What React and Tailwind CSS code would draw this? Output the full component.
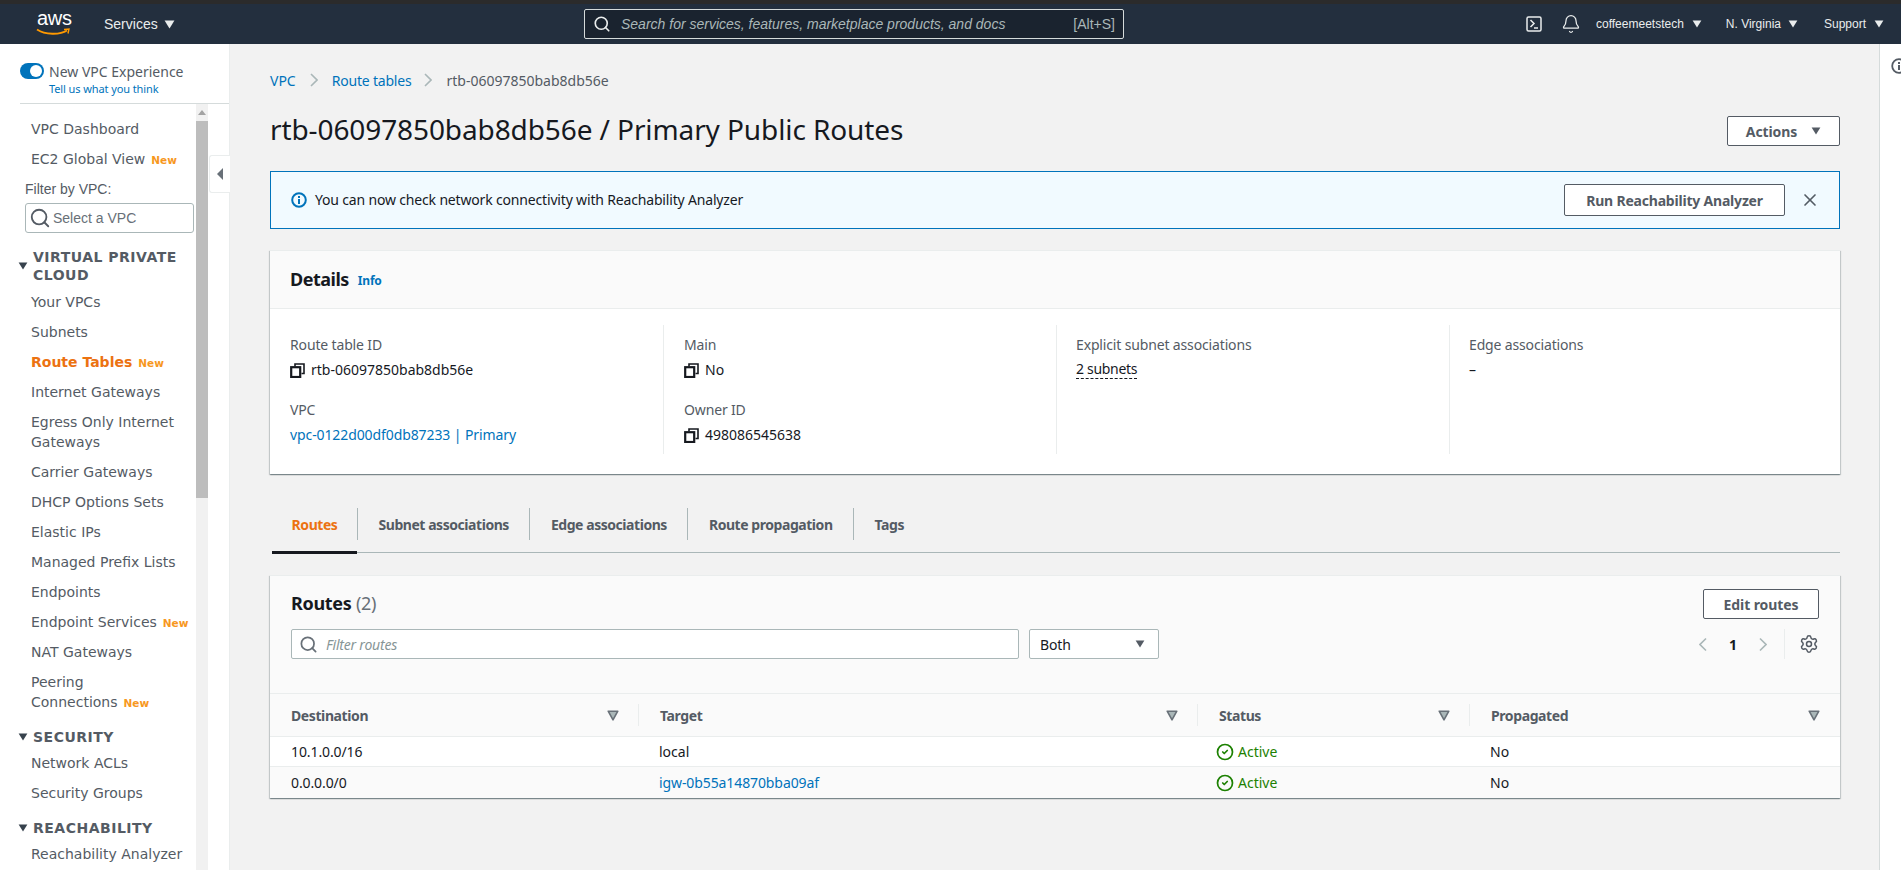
import React from 'react';
import { Bell, Search, X, Settings, CircleCheck } from 'lucide-react';

const cardShadow = 'shadow-[0_1px_1px_0_rgba(0,28,36,0.3),1px_1px_1px_0_rgba(0,28,36,0.15),-1px_1px_1px_0_rgba(0,28,36,0.15)]';
const mainFont = 'font-["Noto_Sans",sans-serif]';

const Caret = ({ className = '' }) => (
    <svg viewBox="0 0 12 10" className={className}>
        <path d="M0.5 0.5h11L6 9.5z" fill="currentColor" />
    </svg>
);

const FilterCaret = () => (
    <svg viewBox="0 0 12 11" className="w-3 h-[11px] shrink-0">
        <path d="M1.2 1.2h9.6L6 9.8z" fill="#aab7b8" stroke="#687078" strokeWidth="1.6" strokeLinejoin="round" />
    </svg>
);

const Chevron = ({ left, className = '' }) => (
    <svg viewBox="0 0 8 14" className={`shrink-0 ${className}`} fill="none" stroke="currentColor" strokeWidth="1.6">
        <path d={left ? 'M7 1L1 7l6 6' : 'M1 1l6 6-6 6'} />
    </svg>
);

const CopyIcon = () => (
    <svg viewBox="0 0 15 15" className="w-[15px] h-[15px] shrink-0 text-[#16191f]" fill="none" stroke="currentColor">
        <path d="M5 3.5V1h9v9.5h-2.5" strokeWidth="1.6" />
        <rect x="1.2" y="4.2" width="9" height="9.8" strokeWidth="2.2" />
    </svg>
);

const New = () => <span className='text-[10.5px] font-bold text-[#f7981f] ml-[6px] font-["DejaVu_Sans",sans-serif] leading-none tracking-normal'>New</span>;

const NavItem = ({ children, isNew, active, className = 'mb-[10px]' }) => (
    <li className={`pl-[31px] leading-5 ${className} ${active ? 'text-[#ec7211] font-bold' : 'text-[#545b64]'}`}>
        {children}
        {isNew && <New />}
    </li>
);

const NavSection = ({ children, className = '' }) => (
    <div className={`flex items-center font-bold text-[#545b64] text-[14px] leading-[18px] tracking-[0.5px] pl-[18px] ${className}`}>
        <Caret className="w-[10px] h-[8px] mr-[5px] shrink-0 text-[#37424d]" />
        <span>{children}</span>
    </div>
);

function TopBar() {
    return (
        <header className='shrink-0 font-["Liberation_Sans",sans-serif]'>
            <div className="h-1 bg-[#2b2b2b]" />
            <div className="h-10 bg-[#232f3e] flex items-center text-[#eaeded] text-[13px]">
                <div className="w-[104px] pl-[37px] relative h-10">
                    <span className='block text-white text-[20px] leading-[20px] pt-[4px] tracking-[-0.3px]'>aws</span>
                    <svg viewBox="0 0 34 8" className="absolute left-[36px] top-[24px] w-[34px] h-[8px]">
                        <path d="M1 1.5C9 7 24 7 31 2.5" fill="none" stroke="#ff9900" strokeWidth="1.8" />
                        <path d="M28 1.5l5-.5-1 4.5" fill="none" stroke="#ff9900" strokeWidth="1.4" />
                    </svg>
                </div>
                <div className="flex items-center text-[14px] w-[480px]">
                    Services
                    <Caret className="w-[11px] h-[9px] ml-[6px]" />
                </div>
                <div className="w-[540px] h-[30px] bg-[#1a232f] border border-[#d5dbdb] rounded-[2px] flex items-center pl-2 pr-2">
                    <Search className="w-[18px] h-[18px] text-[#eaeded] mr-[10px]" strokeWidth={2.2} />
                    <span className="flex-1 italic text-[#aab7b8] text-[14px]">Search for services, features, marketplace products, and docs</span>
                    <span className="text-[#aab7b8] text-[14px]">[Alt+S]</span>
                </div>
                <div className="flex-1" />
                <svg viewBox="0 0 16 16" className="w-4 h-4 mr-[19px]" fill="none" stroke="#eaeded" strokeWidth="1.5">
                    <rect x="1" y="1" width="14" height="14" rx="1.5" />
                    <path d="M4.5 4L8 7.5 4.5 11M8 12h4" />
                </svg>
                <Bell className="w-5 h-5 mr-[15px]" strokeWidth={1.5} />
                <div className="flex items-center text-[12px]">
                    coffeemeetstech
                    <Caret className="w-[10px] h-[8px] ml-[8px]" />
                </div>
                <div className="flex items-center text-[12px] ml-6">
                    N. Virginia
                    <Caret className="w-[10px] h-[8px] ml-[7px]" />
                </div>
                <div className="flex items-center text-[12px] ml-[26px] mr-[17px]">
                    Support
                    <Caret className="w-[10px] h-[8px] ml-[8px]" />
                </div>
            </div>
        </header>
    );
}

function Sidebar() {
    return (
        <aside className="w-[230px] shrink-0 bg-white relative flex flex-col border-r border-[#eaeded]">
            <div className='h-[60px] ml-5 border-b border-[#d5dbdb] pt-[19px] font-["Noto_Sans",sans-serif] shrink-0'>
                <div className="flex items-center h-[16px]">
                    <div className="w-[24px] h-[16px] rounded-full bg-[#0073bb] flex items-center justify-end pr-[2px]">
                        <div className="w-3 h-3 rounded-full bg-white" />
                    </div>
                    <span className="ml-[5px] text-[14px] text-[#545b64]">New VPC Experience</span>
                </div>
                <div className="ml-[29px] mt-[1px] text-[11px] leading-[18px] tracking-[-0.1px] text-[#0073bb]">Tell us what you think</div>
            </div>
            <div className="flex flex-1 min-h-0">
                <div className='w-[196px] pt-[15px] text-[14px] font-["DejaVu_Sans",sans-serif]'>
                    <ul>
                        <NavItem>VPC Dashboard</NavItem>
                        <NavItem isNew className="mb-[11px]">EC2 Global View</NavItem>
                    </ul>
                    <div className='pl-[25px] font-["Liberation_Sans",sans-serif] text-[14px] leading-[18px] text-[#545b64]'>Filter by VPC:</div>
                    <div className='ml-[25px] w-[169px] h-[30px] mt-[5px] border border-[#aab7b8] rounded-[3px] flex items-center pl-[3px] font-["Liberation_Sans",sans-serif] text-[14px] text-[#687078]'>
                        <Search className="w-[22px] h-[22px] text-[#545b64] mr-[2px]" strokeWidth={2} />
                        Select a VPC
                    </div>
                    <NavSection className="mt-[15px] mb-2">VIRTUAL PRIVATE CLOUD</NavSection>
                    <ul>
                        <NavItem>Your VPCs</NavItem>
                        <NavItem>Subnets</NavItem>
                        <NavItem active>Route Tables<New /></NavItem>
                        <NavItem>Internet Gateways</NavItem>
                        <NavItem>Egress Only Internet Gateways</NavItem>
                        <NavItem>Carrier Gateways</NavItem>
                        <NavItem>DHCP Options Sets</NavItem>
                        <NavItem>Elastic IPs</NavItem>
                        <NavItem>Managed Prefix Lists</NavItem>
                        <NavItem>Endpoints</NavItem>
                        <NavItem isNew>Endpoint Services</NavItem>
                        <NavItem>NAT Gateways</NavItem>
                        <NavItem isNew className="mb-4 pr-[40px]">Peering Connections</NavItem>
                    </ul>
                    <NavSection className="mb-[7px]">SECURITY</NavSection>
                    <ul>
                        <NavItem>Network ACLs</NavItem>
                        <NavItem className="mb-4">Security Groups</NavItem>
                    </ul>
                    <NavSection className="mb-[7px]">REACHABILITY</NavSection>
                    <ul>
                        <NavItem>Reachability Analyzer</NavItem>
                    </ul>
                </div>
                <div className="w-3 bg-[#f1f1f1] flex flex-col">
                    <div className="h-[17px] flex items-center justify-center">
                        <svg viewBox="0 0 8 5" className="w-2 h-[5px]"><path d="M4 0l4 5H0z" fill="#a3a3a3" /></svg>
                    </div>
                    <div className="h-[377px] bg-[#bdbdbd]" />
                </div>
            </div>
            <div className="absolute left-[209px] top-[111px] w-[21px] h-[38px] bg-white border border-r-0 border-[#eaeded] rounded-l-[3px] flex items-center justify-center">
                <svg viewBox="0 0 6 12" className="w-[6px] h-[12px]"><path d="M6 0v12L0 6z" fill="#687078" /></svg>
            </div>
        </aside>
    );
}

function DetailField({ label, children, className = '' }) {
    return (
        <div className={className}>
            <div className="text-[14px] leading-5 tracking-[-0.15px] text-[#545b64]">{label}</div>
            <div className="mt-[5px] text-[14px] leading-5 text-[#16191f] flex items-center gap-[6px]">{children}</div>
        </div>
    );
}

function DetailsCard() {
    return (
        <section className={`mt-[21px] bg-white border-t border-[#eaeded] ${cardShadow}`}>
            <div className="h-[58px] bg-[#fafafa] border-b border-[#eaeded] flex items-center pl-5">
                <h2 className="text-[18px] font-bold tracking-[-0.5px] text-[#16191f]">Details</h2>
                <span className="ml-[9px] text-[12px] font-bold tracking-[-0.2px] text-[#0073bb] mt-[2px]">Info</span>
            </div>
            <div className="grid grid-cols-[394px_393px_393px_1fr] pt-4 pb-5">
                <div className="pl-5 pt-[10px] pb-[9px] border-r border-[#eaeded]">
                    <DetailField label="Route table ID"><CopyIcon />rtb-06097850bab8db56e</DetailField>
                    <DetailField label="VPC" className="mt-5"><span className="text-[#0073bb] tracking-[-0.1px]">vpc-0122d00df0db87233 | Primary</span></DetailField>
                </div>
                <div className="pl-5 pt-[10px] pb-[9px] border-r border-[#eaeded]">
                    <DetailField label="Main"><CopyIcon />No</DetailField>
                    <DetailField label="Owner ID" className="mt-5"><CopyIcon />498086545638</DetailField>
                </div>
                <div className="pl-[19px] pt-[10px] pb-[9px] border-r border-[#eaeded]">
                    <DetailField label="Explicit subnet associations">
                        <span className="border-b border-dashed border-[#16191f] leading-[18px] tracking-[-0.3px]">2 subnets</span>
                    </DetailField>
                </div>
                <div className="pl-[19px] pt-[10px] pb-[9px]">
                    <DetailField label="Edge associations">–</DetailField>
                </div>
            </div>
        </section>
    );
}

function Tabs() {
    const tabs = ['Subnet associations', 'Edge associations', 'Route propagation', 'Tags'];
    return (
        <div className="mt-[34px] h-[45px] ml-[2px] border-b border-[#aab7b8] flex text-[14px] font-bold tracking-[-0.45px] text-[#545b64]">
            <div className="h-[46px] w-[85px] border-b-[3px] border-[#16191f] flex items-start">
                <div className="h-8 w-full flex items-center justify-center text-[#ec7211]">Routes</div>
            </div>
            {tabs.map((tab) => (
                <div key={tab} className="h-8 px-[20.5px] border-l border-[#aab7b8] flex items-center">{tab}</div>
            ))}
        </div>
    );
}

const columns = ['Destination', 'Target', 'Status', 'Propagated'];
const rows = [
    { destination: '10.1.0.0/16', target: 'local', status: 'Active', propagated: 'No', rowClass: 'bg-white h-[30px] border-b border-[#eaeded]' },
    { destination: '0.0.0.0/0', target: 'igw-0b55a14870bba09af', link: true, status: 'Active', propagated: 'No', rowClass: 'bg-[#fafafa] h-[31px]' },
];
const tableGrid = 'grid grid-cols-[369px_559px_272px_370px]';

function RoutesCard() {
    return (
        <section className={`mt-[22px] bg-[#fafafa] border-t border-[#eaeded] ${cardShadow}`}>
            <div className="h-[118px] pl-[21px] pr-[21px] flex justify-between border-b border-[#eaeded]">
                <div>
                    <h2 className="mt-[15px] text-[18px] leading-6 font-bold tracking-[-0.3px] text-[#16191f]">Routes <span className="font-normal text-[#687078]">(2)</span></h2>
                    <div className="mt-[14px] flex gap-[10px]">
                        <div className="w-[728px] h-[30px] bg-white border border-[#aab7b8] rounded-[2px] flex items-center pl-[7px]">
                            <Search className="w-[19px] h-[19px] text-[#687078] mr-2" strokeWidth={2.2} />
                            <span className="italic text-[14px] tracking-[-0.2px] text-[#879596]">Filter routes</span>
                        </div>
                        <div className="w-[130px] h-[30px] bg-white border border-[#aab7b8] rounded-[2px] flex items-center justify-between pl-[10px] pr-[13px] text-[14px] tracking-[-0.1px] text-[#16191f]">
                            Both
                            <Caret className="w-[10px] h-[8px] text-[#545b64]" />
                        </div>
                    </div>
                </div>
                <div className="flex flex-col items-end">
                    <button className="mt-[13px] w-[116px] h-[30px] bg-white border border-[#545b64] rounded-[2px] text-[14px] font-bold tracking-[-0.1px] text-[#545b64]">Edit routes</button>
                    <div className="mt-[10px] h-[30px] flex items-center text-[#aab7b8]">
                        <Chevron left className="w-2 h-[15px]" />
                        <span className="mx-[22px] w-2 text-center text-[14px] font-bold text-[#16191f]">1</span>
                        <Chevron className="w-2 h-[15px]" />
                        <div className="ml-[17px] h-[30px] w-[15px] border-l border-[#eaeded]" />
                        <Settings className="w-5 h-5 text-[#545b64]" strokeWidth={1.8} />
                    </div>
                </div>
            </div>
            <div className={`${tableGrid} h-[43px] border-b border-[#eaeded]`}>
                {columns.map((col, i) => (
                    <div key={col} className="flex items-center pl-[21px] text-[14px] font-bold tracking-[-0.4px] text-[#545b64]">
                        <span className="flex-1">{col}</span>
                        <FilterCaret />
                        <span className={`ml-[19px] w-px h-[22px] ${i < 3 ? 'bg-[#eaeded]' : ''}`} />
                    </div>
                ))}
            </div>
            {rows.map((row) => (
                <div key={row.destination} className={`${tableGrid} ${row.rowClass} items-center text-[14px] text-[#16191f]`}>
                    <div className="pl-[21px] tracking-[-0.1px]">{row.destination}</div>
                    <div className="pl-[20px]"><span className={row.link ? 'text-[#0073bb] tracking-[-0.1px]' : ''}>{row.target}</span></div>
                    <div className="pl-[18px] flex items-center gap-1 text-[#1d8102]">
                        <CircleCheck className="w-[18px] h-[18px]" strokeWidth={2.3} />
                        {row.status}
                    </div>
                    <div className="pl-[20px]">{row.propagated}</div>
                </div>
            ))}
        </section>
    );
}

export default function App() {
    return (
        <div className="h-[870px] overflow-hidden flex flex-col bg-[#f2f2f2]">
            <TopBar />
            <div className="flex flex-1 min-h-0">
                <Sidebar />
                <main className={`flex-1 min-w-0 pl-10 pr-[39px] pt-[26px] ${mainFont}`}>
                    <nav className="flex items-center h-5 text-[14px]">
                        <span className="text-[#0073bb]">VPC</span>
                        <Chevron className="w-2 h-[14px] ml-[14px] mr-[14px] text-[#aab7b8]" />
                        <span className="text-[#0073bb] tracking-[-0.2px]">Route tables</span>
                        <Chevron className="w-2 h-[14px] ml-[13px] mr-[14px] text-[#aab7b8]" />
                        <span className="text-[#545b64]">rtb-06097850bab8db56e</span>
                    </nav>
                    <div className="mt-[23px] flex items-center justify-between h-9">
                        <h1 className="text-[28px] leading-[33px] pb-[3px] tracking-[-0.1px] text-[#16191f]">rtb-06097850bab8db56e / Primary Public Routes</h1>
                        <button className="w-[113px] h-[30px] bg-white border border-[#545b64] rounded-[2px] text-[14px] font-bold tracking-[-0.1px] text-[#545b64] flex items-center justify-center gap-[14px]">
                            Actions
                            <Caret className="w-[10px] h-[8px]" />
                        </button>
                    </div>
                    <div className="mt-[22px] h-[58px] border border-[#0073bb] bg-[#f1faff] flex items-center pl-5 pr-[19px]">
                        <svg viewBox="0 0 16 16" className="w-4 h-4" fill="none">
                            <circle cx="8" cy="8" r="6.8" stroke="#0073bb" strokeWidth="2" />
                            <rect x="7" y="7" width="2" height="5" fill="#0073bb" />
                            <rect x="7" y="4" width="2" height="2" fill="#0073bb" />
                        </svg>
                        <span className="ml-[8px] flex-1 text-[14px] tracking-[-0.17px] text-[#16191f] pb-[1px]">You can now check network connectivity with Reachability Analyzer</span>
                        <button className="w-[221px] h-8 bg-white border border-[#545b64] rounded-[2px] text-[14px] font-bold tracking-[-0.2px] text-[#545b64]">Run Reachability Analyzer</button>
                        <X className="w-5 h-5 ml-[15px] text-[#545b64]" strokeWidth={2} />
                    </div>
                    <DetailsCard />
                    <Tabs />
                    <RoutesCard />
                </main>
                <div className="w-[22px] shrink-0 bg-white border-l border-[#d5dbdb] pl-[11px] pt-[14px] overflow-hidden">
                    <svg viewBox="0 0 16 16" className="w-4 h-4" fill="none">
                        <circle cx="8" cy="8" r="6.8" stroke="#545b64" strokeWidth="1.8" />
                        <rect x="7" y="7" width="2" height="5" fill="#545b64" />
                        <rect x="7" y="4" width="2" height="2" fill="#545b64" />
                    </svg>
                </div>
            </div>
        </div>
    );
}
